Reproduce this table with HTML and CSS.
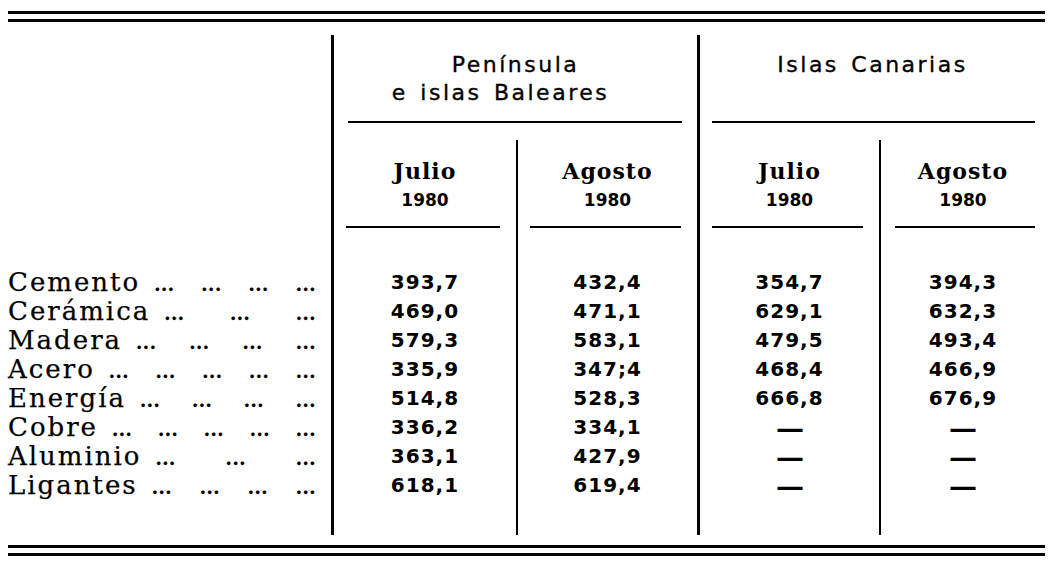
FILE: index.html
```html
<!DOCTYPE html>
<html lang="es">
<head>
<meta charset="utf-8">
<title>Índices de costes</title>
<link rel="stylesheet" href="styles.css">
</head>
<body>
<div class="sheet">
  <div class="double-rule"></div>
  <div class="table">
    <div class="labels">
      <div class="label"><span class="name">Cemento</span><span class="leader"><i>...</i><i>...</i><i>...</i><i>...</i></span></div>
      <div class="label"><span class="name">Cerámica</span><span class="leader wide"><i>...</i><i>...</i><i>...</i></span></div>
      <div class="label"><span class="name">Madera</span><span class="leader"><i>...</i><i>...</i><i>...</i><i>...</i></span></div>
      <div class="label"><span class="name">Acero</span><span class="leader"><i>...</i><i>...</i><i>...</i><i>...</i><i>...</i></span></div>
      <div class="label"><span class="name">Energía</span><span class="leader"><i>...</i><i>...</i><i>...</i><i>...</i></span></div>
      <div class="label"><span class="name">Cobre</span><span class="leader"><i>...</i><i>...</i><i>...</i><i>...</i><i>...</i></span></div>
      <div class="label"><span class="name">Aluminio</span><span class="leader wide"><i>...</i><i>...</i><i>...</i></span></div>
      <div class="label"><span class="name">Ligantes</span><span class="leader"><i>...</i><i>...</i><i>...</i><i>...</i></span></div>
    </div>

    <div class="group g1">
      <div class="group-title">Península<br><span class="line2">e islas Baleares</span></div>
      <div class="group-rule"></div>
      <div class="subcols">
        <div class="subcol s1">
          <div class="subhead"><div class="month">Julio</div><div class="year">1980</div></div>
          <div class="subrule"></div>
          <div class="values">
            <div>393,7</div><div>469,0</div><div>579,3</div><div>335,9</div>
            <div>514,8</div><div>336,2</div><div>363,1</div><div>618,1</div>
          </div>
        </div>
        <div class="subcol s2">
          <div class="subhead"><div class="month">Agosto</div><div class="year">1980</div></div>
          <div class="subrule"></div>
          <div class="values">
            <div>432,4</div><div>471,1</div><div>583,1</div><div>347;4</div>
            <div>528,3</div><div>334,1</div><div>427,9</div><div>619,4</div>
          </div>
        </div>
      </div>
    </div>

    <div class="group g2">
      <div class="group-title">Islas Canarias</div>
      <div class="group-rule"></div>
      <div class="subcols">
        <div class="subcol s3">
          <div class="subhead"><div class="month">Julio</div><div class="year">1980</div></div>
          <div class="subrule"></div>
          <div class="values">
            <div>354,7</div><div>629,1</div><div>479,5</div><div>468,4</div>
            <div>666,8</div><div><span class="dash">—</span></div><div><span class="dash">—</span></div><div><span class="dash">—</span></div>
          </div>
        </div>
        <div class="subcol s4">
          <div class="subhead"><div class="month">Agosto</div><div class="year">1980</div></div>
          <div class="subrule"></div>
          <div class="values">
            <div>394,3</div><div>632,3</div><div>493,4</div><div>466,9</div>
            <div>676,9</div><div><span class="dash">—</span></div><div><span class="dash">—</span></div><div><span class="dash">—</span></div>
          </div>
        </div>
      </div>
    </div>
  </div>
  <div class="double-rule bottom"></div>
</div>
</body>
</html>
```

FILE: styles.css
```css
* { box-sizing: border-box; }

html, body {
  margin: 0;
  padding: 0;
  background: #fff;
}

body {
  color: #000;
  font-family: "DejaVu Serif", "Liberation Serif", serif;
}

.sheet {
  width: 1057px;
  padding: 11px 12px 0 8px;
}

.double-rule {
  height: 11px;
  border-top: 3px solid #000;
  border-bottom: 3px solid #000;
}

.double-rule.bottom {
  margin-top: 10px;
}

.table {
  display: flex;
  height: 500px;
  margin-top: 13px;
}

/* label column */
.labels {
  width: 323px;
  padding: 233px 15px 0 0;
}

.label {
  display: flex;
  align-items: baseline;
  height: 29px;
  line-height: 29px;
  font-size: 26px;
  letter-spacing: 2px;
  white-space: nowrap;
  -webkit-text-stroke: 0.25px #000;
}

.leader {
  flex: 1;
  display: flex;
  justify-content: space-between;
  margin-left: 14px;
  font-size: 18px;
  font-weight: bold;
  letter-spacing: 0.5px;
}

.leader i {
  font-style: normal;
}

/* column groups */
.group {
  display: flex;
  flex-direction: column;
  border-left: 3px solid #000;
}

.g1 { width: 366px; }
.g2 { flex: 1; }

.group-title {
  height: 86px;
  padding-top: 16px;
  text-align: center;
  font-family: "DejaVu Sans", "Liberation Sans", sans-serif;
  font-size: 22px;
  line-height: 28px;
  letter-spacing: 2.5px;
  word-spacing: 3px;
  -webkit-text-stroke: 0.35px #000;
}

.line2 {
  display: inline-block;
  padding-right: 30px;
}

.group-rule {
  height: 2px;
  background: #000;
  margin: 0 15px 0 14px;
}

.g2 .group-rule {
  margin: 0 10px 0 12px;
}

.subcols {
  flex: 1;
  display: flex;
  margin-top: 17px;
}

.subcol {
  display: flex;
  flex-direction: column;
}

.s1 { width: 182px; }
.s2 { flex: 1; border-left: 2px solid #000; }
.s3 { width: 179px; }
.s4 { flex: 1; border-left: 2px solid #000; }

.subhead {
  height: 86px;
  padding-top: 19px;
  text-align: center;
}

.month {
  font-family: "DejaVu Serif", serif;
  font-weight: bold;
  font-size: 22px;
  line-height: 25px;
  letter-spacing: 1px;
}

.year {
  margin-top: 4px;
  font-family: "DejaVu Sans", sans-serif;
  font-weight: bold;
  font-size: 17px;
  line-height: 24px;
}

.subrule {
  height: 2px;
  background: #000;
  margin: 0 16px 0 12px;
}

.s4 .subrule {
  margin: 0 10px 0 14px;
}

.values {
  padding-top: 40px;
  text-align: center;
  font-family: "DejaVu Sans", sans-serif;
  font-weight: bold;
  font-size: 20px;
  line-height: 29px;
  letter-spacing: 1px;
}

.values > div {
  height: 29px;
}

.dash {
  display: inline-block;
  font-size: 20px;
  line-height: 24px;
  letter-spacing: 0;
  vertical-align: middle;
  transform: scale(1.4, 1.2);
}
```
